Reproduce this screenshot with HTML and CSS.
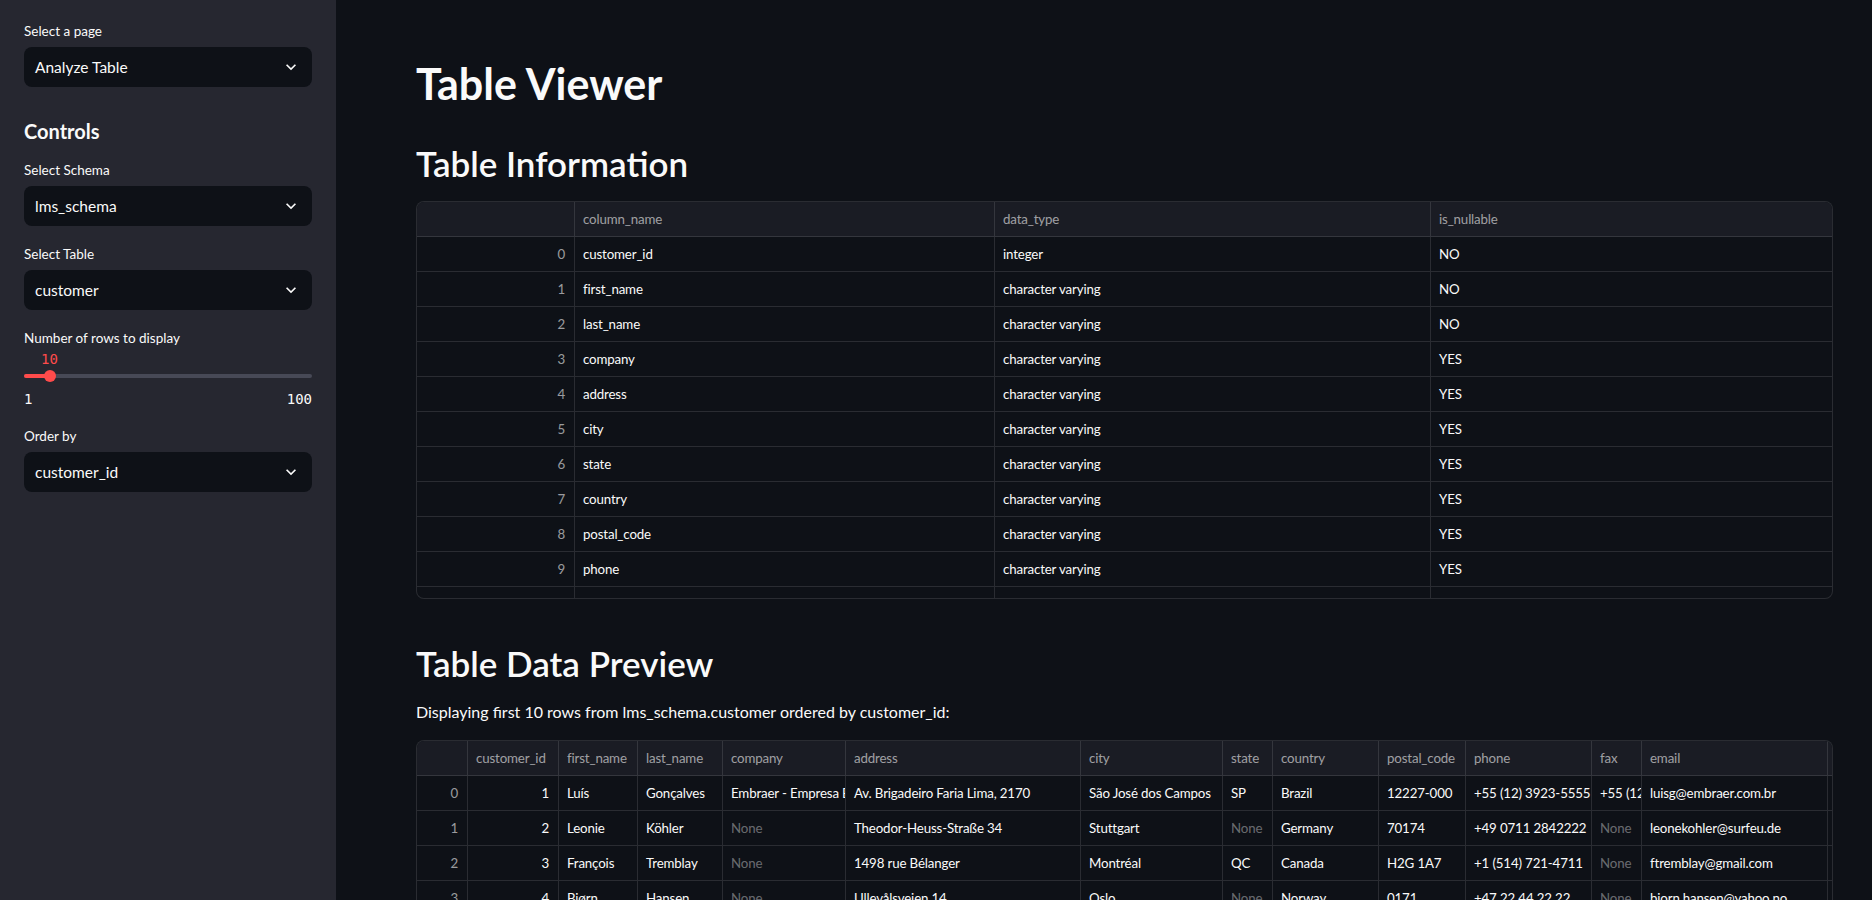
FILE: index.html
```html
<!DOCTYPE html>
<html lang="en">
<head>
<meta charset="utf-8">
<title>Table Viewer</title>
<link rel="stylesheet" href="styles.css">
</head>
<body>
<div class="app">
  <aside class="sidebar">
    <div class="field">
      <div class="field-label">Select a page</div>
      <div class="select"><span>Analyze Table</span><svg class="chev" viewBox="0 0 24 24" width="20" height="20"><path d="M16.59 8.59L12 13.17 7.41 8.59 6 10l6 6 6-6z"/></svg></div>
    </div>
    <h3 class="side-heading">Controls</h3>
    <div class="field">
      <div class="field-label">Select Schema</div>
      <div class="select"><span>lms_schema</span><svg class="chev" viewBox="0 0 24 24" width="20" height="20"><path d="M16.59 8.59L12 13.17 7.41 8.59 6 10l6 6 6-6z"/></svg></div>
    </div>
    <div class="field">
      <div class="field-label">Select Table</div>
      <div class="select"><span>customer</span><svg class="chev" viewBox="0 0 24 24" width="20" height="20"><path d="M16.59 8.59L12 13.17 7.41 8.59 6 10l6 6 6-6z"/></svg></div>
    </div>
    <div class="field slider-field">
      <div class="field-label">Number of rows to display</div>
      <div class="slider">
        <div class="slider-value">10</div>
        <div class="track"><div class="track-fill"></div><div class="thumb"></div></div>
        <div class="ticks"><span>1</span><span>100</span></div>
      </div>
    </div>
    <div class="field">
      <div class="field-label">Order by</div>
      <div class="select"><span>customer_id</span><svg class="chev" viewBox="0 0 24 24" width="20" height="20"><path d="M16.59 8.59L12 13.17 7.41 8.59 6 10l6 6 6-6z"/></svg></div>
    </div>
  </aside>

  <main class="main">
    <h1 class="title">Table Viewer</h1>
    <h2 class="section">Table Information</h2>
    <div class="grid grid-info">
      <div class="gtable info-cols">
        <div class="c h"></div><div class="c h">column_name</div><div class="c h">data_type</div><div class="c h last">is_nullable</div>
        <div class="c idx">0</div><div class="c">customer_id</div><div class="c">integer</div><div class="c last">NO</div>
        <div class="c idx">1</div><div class="c">first_name</div><div class="c">character varying</div><div class="c last">NO</div>
        <div class="c idx">2</div><div class="c">last_name</div><div class="c">character varying</div><div class="c last">NO</div>
        <div class="c idx">3</div><div class="c">company</div><div class="c">character varying</div><div class="c last">YES</div>
        <div class="c idx">4</div><div class="c">address</div><div class="c">character varying</div><div class="c last">YES</div>
        <div class="c idx">5</div><div class="c">city</div><div class="c">character varying</div><div class="c last">YES</div>
        <div class="c idx">6</div><div class="c">state</div><div class="c">character varying</div><div class="c last">YES</div>
        <div class="c idx">7</div><div class="c">country</div><div class="c">character varying</div><div class="c last">YES</div>
        <div class="c idx">8</div><div class="c">postal_code</div><div class="c">character varying</div><div class="c last">YES</div>
        <div class="c idx">9</div><div class="c">phone</div><div class="c">character varying</div><div class="c last">YES</div>
        <div class="c idx">10</div><div class="c">fax</div><div class="c">character varying</div><div class="c last">YES</div>
        <div class="c idx">11</div><div class="c">email</div><div class="c">character varying</div><div class="c last">NO</div>
      </div>
    </div>

    <h2 class="section section-2">Table Data Preview</h2>
    <p class="caption">Displaying first 10 rows from lms_schema.customer ordered by customer_id:</p>
    <div class="grid grid-data">
      <div class="gtable data-cols">
        <div class="c h"></div><div class="c h num">customer_id</div><div class="c h">first_name</div><div class="c h">last_name</div><div class="c h">company</div><div class="c h">address</div><div class="c h">city</div><div class="c h">state</div><div class="c h">country</div><div class="c h">postal_code</div><div class="c h">phone</div><div class="c h">fax</div><div class="c h">email</div><div class="c h last"></div>

        <div class="c idx">0</div><div class="c num">1</div><div class="c">Luís</div><div class="c">Gonçalves</div><div class="c">Embraer - Empresa Brasileira de Aeronáutica S.A.</div><div class="c">Av. Brigadeiro Faria Lima, 2170</div><div class="c">São José dos Campos</div><div class="c">SP</div><div class="c">Brazil</div><div class="c">12227-000</div><div class="c">+55 (12) 3923-5555</div><div class="c">+55 (12) 3923-5566</div><div class="c">luisg@embraer.com.br</div><div class="c last"></div>

        <div class="c idx">1</div><div class="c num">2</div><div class="c">Leonie</div><div class="c">Köhler</div><div class="c none">None</div><div class="c">Theodor-Heuss-Straße 34</div><div class="c">Stuttgart</div><div class="c none">None</div><div class="c">Germany</div><div class="c">70174</div><div class="c">+49 0711 2842222</div><div class="c none">None</div><div class="c">leonekohler@surfeu.de</div><div class="c last"></div>

        <div class="c idx">2</div><div class="c num">3</div><div class="c">François</div><div class="c">Tremblay</div><div class="c none">None</div><div class="c">1498 rue Bélanger</div><div class="c">Montréal</div><div class="c">QC</div><div class="c">Canada</div><div class="c">H2G 1A7</div><div class="c">+1 (514) 721-4711</div><div class="c none">None</div><div class="c">ftremblay@gmail.com</div><div class="c last"></div>

        <div class="c idx">3</div><div class="c num">4</div><div class="c">Bjørn</div><div class="c">Hansen</div><div class="c none">None</div><div class="c">Ullevålsveien 14</div><div class="c">Oslo</div><div class="c none">None</div><div class="c">Norway</div><div class="c">0171</div><div class="c">+47 22 44 22 22</div><div class="c none">None</div><div class="c">bjorn.hansen@yahoo.no</div><div class="c last"></div>

        <div class="c idx">4</div><div class="c num">5</div><div class="c">František</div><div class="c">Wichterlová</div><div class="c">JetBrains s.r.o.</div><div class="c">Klanova 9/506</div><div class="c">Prague</div><div class="c none">None</div><div class="c">Czech Republic</div><div class="c">14700</div><div class="c">+420 2 4172 5555</div><div class="c">+420 2 4172 5555</div><div class="c">frantisekw@jetbrains.com</div><div class="c last"></div>
      </div>
    </div>
  </main>
</div>
</body>
</html>
```

FILE: styles.css
```css
* { box-sizing: border-box; }

html, body {
  margin: 0;
  padding: 0;
  height: 100%;
  overflow: hidden;
  background: #0e1117;
  color: #fafafa;
  font-family: Lato, "Noto Sans", sans-serif;
}

.app {
  display: flex;
  height: 900px;
  overflow: hidden;
}

/* ---------- Sidebar ---------- */
.sidebar {
  width: 336px;
  flex: 0 0 336px;
  background: #262730;
  padding: 21px 24px 0 24px;
  display: flex;
  flex-direction: column;
}

.field {
  display: flex;
  flex-direction: column;
  margin-bottom: 18px;
}

.field-label {
  font-size: 13.5px;
  line-height: 21px;
  height: 21px;
  margin-bottom: 5px;
  color: #fafafa;
}

.select {
  height: 40px;
  background: #0e1117;
  border-radius: 8px;
  display: flex;
  align-items: center;
  justify-content: space-between;
  padding: 0 11px 0 11px;
  font-size: 15.5px;
}

.chev { fill: #fafafa; }

.side-heading {
  margin: 11px 0 14px 0;
  font-size: 20px;
  line-height: 30px;
  font-weight: 700;
}

.slider-field { margin-bottom: 18px; }
.slider-field .field-label { margin-bottom: 0; }

.slider {
  height: 59px;
  display: flex;
  flex-direction: column;
}

.slider-value {
  font-family: "DejaVu Sans Mono", "Liberation Mono", monospace;
  font-size: 14px;
  line-height: 18px;
  color: #ff4b4b;
  margin-top: 1px;
  padding-left: 17px;
}

.track {
  position: relative;
  height: 4px;
  margin-top: 6px;
  border-radius: 2px;
  background: #474956;
}

.track-fill {
  width: 26px;
  height: 4px;
  border-radius: 2px;
  background: #ff4b4b;
}

.thumb {
  position: absolute;
  left: 20px;
  top: -4px;
  width: 12px;
  height: 12px;
  border-radius: 50%;
  background: #ff4b4b;
}

.ticks {
  display: flex;
  justify-content: space-between;
  margin-top: 11px;
  font-family: "DejaVu Sans Mono", "Liberation Mono", monospace;
  font-size: 14px;
  line-height: 20px;
  color: #fafafa;
}

/* ---------- Main ---------- */
.main {
  flex: 1;
  padding: 58px 39px 0 80px;
  min-width: 0;
}

.title {
  margin: 0;
  font-size: 43px;
  line-height: 52px;
  font-weight: 700;
}

.section {
  margin: 32px 0 17px 0;
  font-size: 35px;
  line-height: 42px;
  font-weight: 600;
}

.section-2 {
  margin-top: 43px;
  margin-bottom: 16px;
}

.caption {
  margin: 0 0 16px 0;
  font-size: 16px;
  line-height: 24px;
}

.grid {
  border: 1px solid rgba(250, 250, 250, 0.12);
  border-radius: 8px;
  overflow: hidden;
  background: #0e1117;
}

.grid-info { height: 398px; }
.grid-data { height: 400px; }

.gtable {
  display: grid;
  font-size: 13.3px;
  letter-spacing: -0.15px;
}

.info-cols { grid-template-columns: 158px 420px 436px 1fr; }

.data-cols {
  grid-template-columns: 51px 91px 79px 85px 123px 235px 142px 50px 106px 87px 126px 50px 186px 1fr;
}

.c {
  height: 35px;
  line-height: 34px;
  padding: 0 8px;
  border-right: 1px solid rgba(250, 250, 250, 0.12);
  border-bottom: 1px solid rgba(250, 250, 250, 0.12);
  white-space: nowrap;
  overflow: hidden;
  color: #fafafa;
}

.c.last { border-right: none; }

.c.h {
  background: #1a1c24;
  color: rgba(250, 250, 250, 0.6);
}

.c.idx {
  text-align: right;
  color: rgba(250, 250, 250, 0.6);
  padding-right: 9px;
}

.c.num { text-align: right; padding-right: 9px; }
.c.h.num { text-align: left; padding-right: 8px; }

.c.none { color: rgba(250, 250, 250, 0.4); }
```
